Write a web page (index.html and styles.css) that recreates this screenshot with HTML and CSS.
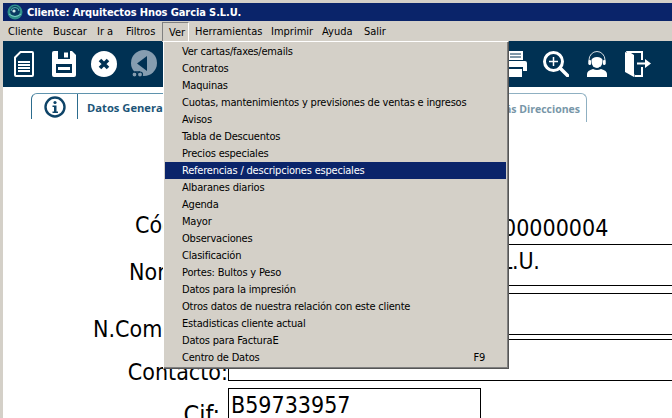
FILE: index.html
```html
<!DOCTYPE html>
<html lang="es">
<head>
<meta charset="utf-8">
<title>Cliente</title>
<link rel="stylesheet" href="styles.css">
</head>
<body>
<div class="window">
  <header class="titlebar">
    <svg class="logo" viewBox="0 0 16 16" width="16" height="16"><circle cx="8" cy="8" r="7.5" fill="#2f8f8a"/><circle cx="8" cy="7" r="5" fill="#0b3b63"/><path d="M4 7a4 3.5 0 0 1 8 0" fill="none" stroke="#58b8b0" stroke-width="1"/><circle cx="7" cy="7" r="1.6" fill="#cfe8ea"/><path d="M2 10q6 5 12 0" fill="none" stroke="#7fd0c8"/></svg>
    <span class="title-text">Cliente: Arquitectos Hnos Garcia S.L.U.</span>
  </header>
  <nav class="menubar">
    <span class="menu-item m-cliente">Cliente</span>
    <span class="menu-item m-buscar">Buscar</span>
    <span class="menu-item m-ira">Ir a</span>
    <span class="menu-item m-filtros">Filtros</span>
    <div class="menu-open">
      <span class="menu-item m-ver">Ver</span>
      <ul class="popup">
        <li>Ver cartas/faxes/emails</li>
        <li>Contratos</li>
        <li>Maquinas</li>
        <li>Cuotas, mantenimientos y previsiones de ventas e ingresos</li>
        <li>Avisos</li>
        <li>Tabla de Descuentos</li>
        <li>Precios especiales</li>
        <li class="selected">Referencias / descripciones especiales</li>
        <li>Albaranes diarios</li>
        <li>Agenda</li>
        <li>Mayor</li>
        <li>Observaciones</li>
        <li>Clasificación</li>
        <li>Portes: Bultos y Peso</li>
        <li>Datos para la impresión</li>
        <li>Otros datos de nuestra relación con este cliente</li>
        <li>Estadisticas cliente actual</li>
        <li>Datos para FacturaE</li>
        <li>Centro de Datos<span class="shortcut">F9</span></li>
      </ul>
    </div>
    <span class="menu-item m-herr">Herramientas</span>
    <span class="menu-item m-imp">Imprimir</span>
    <span class="menu-item m-ayuda">Ayuda</span>
    <span class="menu-item m-salir">Salir</span>
  </nav>
  <div class="toolbar">
    <div class="tool-group">
      <span class="tool"><svg width="20" height="26" viewBox="0 0 20 26"><path d="M6.500 1H18a1 1 0 0 1 1 1v22a1 1 0 0 1-1 1H2a1 1 0 0 1-1-1V6.500Z" fill="#003153" stroke="#fff" stroke-width="2"/><path d="M4 11h12M4 14h12M4 17h12M4 20h12" stroke="#fff" stroke-width="2"/></svg></span>
      <span class="tool"><svg width="24" height="26" viewBox="0 0 24 26"><path d="M2 0H20L24 4V24a2 2 0 0 1-2 2H2a2 2 0 0 1-2-2V2A2 2 0 0 1 2 0Z" fill="#fff"/><path d="M6 0H18V8H6Z" fill="#003153"/><path d="M12 1.500H16V6.500H12Z" fill="#fff"/><path d="M4 13H20V22H4Z" fill="#003153"/><path d="M6 16H18V19H6Z" fill="#fff"/></svg></span>
      <span class="tool"><svg width="26" height="26" viewBox="0 0 26 26"><circle cx="13" cy="13" r="13" fill="#fff"/><path d="M9 9 17 17M17 9 9 17" stroke="#003153" stroke-width="3.600"/></svg></span>
      <span class="tool"><svg width="26" height="28" viewBox="0 0 26 28"><circle cx="13" cy="13" r="13" fill="#869db0"/><path d="M6 13.500 16 6V21Z" fill="#003153"/><circle cx="3.500" cy="24.500" r="2.500" fill="#869db0" stroke="#003153" stroke-width="1.200"/><circle cx="9" cy="24.500" r="2.500" fill="#869db0" stroke="#003153" stroke-width="1.200"/><path d="M3.500 22h5.500" stroke="#003153" stroke-width="1.500"/></svg></span>
    </div>
    <div class="tool-group">
      <span class="tool"><svg width="24" height="26" viewBox="0 0 24 26"><path d="M5 0H20V9H5Z" fill="#fff"/><path d="M7 3H18M7 6H18" stroke="#003153"/><path d="M2 10H22a2 2 0 0 1 2 2V20H20V16H4V20H0V12a2 2 0 0 1 2-2Z" fill="#fff"/><path d="M5 18H19V26H5Z" fill="#fff"/></svg></span>
      <span class="tool"><svg width="26" height="26" viewBox="0 0 26 26"><circle cx="10.500" cy="10.500" r="9" fill="none" stroke="#fff" stroke-width="3"/><path d="M10.500 6V15M6 10.500H15" stroke="#fff" stroke-width="1.500"/><path d="M17 17 24.500 24.500" stroke="#fff" stroke-width="3.500" stroke-linecap="round"/></svg></span>
      <span class="tool"><svg width="22" height="26" viewBox="0 0 22 26"><path d="M3 13V9a8 8.500 0 0 1 16 0v4" fill="none" stroke="#d5dde3"/><path d="M5.500 9a5.500 3 0 0 1 11 0v2a5.500 6 0 0 1-11 0Z" fill="#fff"/><rect x="2.500" y="9" width="2.500" height="5" rx="1" fill="#fff"/><rect x="17" y="9" width="2.500" height="5" rx="1" fill="#fff"/><path d="M18 14q-2 3-5 2.500" fill="none" stroke="#003153" stroke-width="1"/><path d="M1 26V23q0-3.500 6-5q4 2 8 0q6 1.500 6 5v3Z" fill="#fff"/></svg></span>
      <span class="tool"><svg width="26" height="26" viewBox="0 0 26 26"><path d="M9 26 0 21V1L9 5Z" fill="#fff"/><path d="M1 0H18V9H16V2H6L9 4V24H16V16H18V26H9.500V24Z" fill="#fff"/><path d="M12 11.500H20V8L26 12.500 20 17V13.500H12Z" fill="#fff"/></svg></span>
    </div>
  </div>
  <main class="content">
    <div class="tabs">
      <div class="tab tab-info"><svg width="22" height="22" viewBox="0 0 22 22"><circle cx="11" cy="11" r="9.500" fill="none" stroke="#0e4468" stroke-width="2.400"/><circle cx="11" cy="6.500" r="1.600" fill="#0e4468"/><path d="M8.500 9.500H12.500V15.500H14V17H8.500V15.500H10V11H8.500Z" fill="#0e4468"/></svg></div>
      <div class="tab tab-data">Datos Generales</div>
      <div class="tab tab-more">Más Direcciones</div>
    </div>
    <form class="form">
      <div class="row row-code">
        <label class="label label-code">Código:</label>
        <div class="field field-code">00000004</div>
      </div>
      <div class="row row-name">
        <label class="label label-name">Nombre:</label>
        <div class="field field-name">Arquitectos Hnos Garcia S.L.U.</div>
      </div>
      <div class="row row-trade">
        <label class="label label-trade">N.Comercial:</label>
        <div class="field"></div>
      </div>
      <div class="row row-contact">
        <label class="label label-contact">Contacto:</label>
        <div class="field"></div>
      </div>
      <div class="row row-cif">
        <label class="label label-cif">Cif:</label>
        <div class="field field-cif">B59733957</div>
      </div>
    </form>
  </main>
</div>
</body>
</html>
```
FILE: styles.css
```css
* { box-sizing: border-box; }
html, body { margin: 0; height: 100%; overflow: hidden; background: #fff; }
body { font-family: "DejaVu Sans Condensed", "DejaVu Sans", sans-serif; color: #000; }

.window {
  height: 418px;
  width: 672px;
  padding: 3px 0 0 3px;
  background: #d4d0c8;
  display: flex;
  flex-direction: column;
  overflow: hidden;
}

.titlebar {
  height: 18px;
  flex: none;
  display: flex;
  align-items: center;
  gap: 4px;
  padding-left: 4px;
  background: #0a246a;
  color: #fff;
  font-size: 11px;
  font-weight: 700;
  letter-spacing: -0.1px;
}
.logo { flex: none; }

.menubar {
  height: 20px;
  flex: none;
  display: flex;
  position: relative;
  z-index: 2;
  font-size: 11px;
  line-height: 21px;
  background: #d4d0c8;
}
.menu-item { display: block; white-space: nowrap; }
.m-cliente { width: 50px; padding-left: 5px; }
.m-buscar { width: 44px; }
.m-ira { width: 29px; }
.m-filtros { width: 36px; }
.menu-open { position: relative; width: 33px; flex: none; }
.m-ver {
  width: 27px;
  height: 20px;
  padding-left: 6px;
  border: 1px solid;
  border-color: #808080 #fff #fff #808080;
  margin-top: 1px;
  line-height: 19px;
}
.m-herr { width: 76px; }
.m-imp { width: 51px; }
.m-ayuda { width: 42px; }

.popup {
  position: absolute;
  left: 1px;
  top: 20px;
  width: 346px;
  height: 328px;
  margin: 0;
  padding: 1px 2px 0 1px;
  list-style: none;
  background: #d4d0c8;
  border: 1px solid;
  border-color: #fff #555 #555 #fff;
  box-shadow: inset -1px -1px 0 #808080;
  letter-spacing: -0.2px;
}
.popup li {
  height: 17px;
  line-height: 17px;
  padding: 0 21px 0 17px;
  display: flex;
  justify-content: space-between;
  white-space: nowrap;
}
.popup .selected { background: #0a246a; color: #fff; }

.toolbar {
  height: 46px;
  flex: none;
  display: flex;
  justify-content: space-between;
  align-items: center;
  padding: 0 14px 0 1px;
  background: #003153;
}
.tool-group { display: flex; }
.tool {
  width: 40px;
  height: 30px;
  display: flex;
  align-items: center;
  justify-content: center;
}
.tool-group + .tool-group .tool { width: 41px; }

.content { flex: 1; background: #fff; min-height: 0; }

.tabs {
  display: flex;
  height: 29px;
  margin: 6px 0 0 28px;
  width: 556px;
}
.tab {
  border-top: 1px solid #5f93ad;
  font-family: "Open Sans", "Noto Sans", sans-serif;
  font-size: 11.200px;
  font-weight: 700;
  white-space: nowrap;
}
.tab-info {
  width: 47px;
  height: 26px;
  border-left: 1px solid #2c6c8e;
  border-right: 1px solid #2c6c8e;
  border-top-left-radius: 6px;
  display: flex;
  align-items: center;
  justify-content: center;
}
.tab-data {
  width: 120px;
  height: 26px;
  padding: 6px 0 0 9px;
  color: #1d5578;
}
.tab-more {
  flex: 1;
  border: 1px solid #8fb0c2;
  border-bottom: none;
  border-radius: 0 6px 0 0;
  padding: 8px 6px 0 0;
  text-align: right;
  font-size: 10.500px;
  color: #7896a8;
}

.form { margin-top: 89px; font-size: 23px; }
.row { display: flex; height: 42px; }
.label {
  width: 225px;
  flex: none;
  line-height: 28px;
  text-align: right;
  white-space: nowrap;
}
.field {
  flex: 1;
  border: 1px solid #000;
  border-right: none;
  line-height: 32px;
  padding-left: 2px;
  white-space: nowrap;
}
.row-code { height: 34px; }
.row-name { margin-top: -1px; }
.row-trade { margin-top: 7px; }
.row-contact { margin-top: 4px; }
.row-cif { margin-top: 7px; height: 40px; }
.label-code { text-align: left; padding-left: 132px; }
.label-name { text-align: left; padding: 14px 0 0 126px; }
.label-trade { text-align: left; padding: 22px 0 0 90px; }
.label-contact { padding-top: 19px; }
.label-cif { padding: 13px 8px 0 0; font-size: 25px; }
.field-code { border-top: none; padding: 1px 0 0 274px; }
.field-name { letter-spacing: -0.24px; }
.field-cif { flex: none; width: 253px; border-right: 1px solid #000; }
```
